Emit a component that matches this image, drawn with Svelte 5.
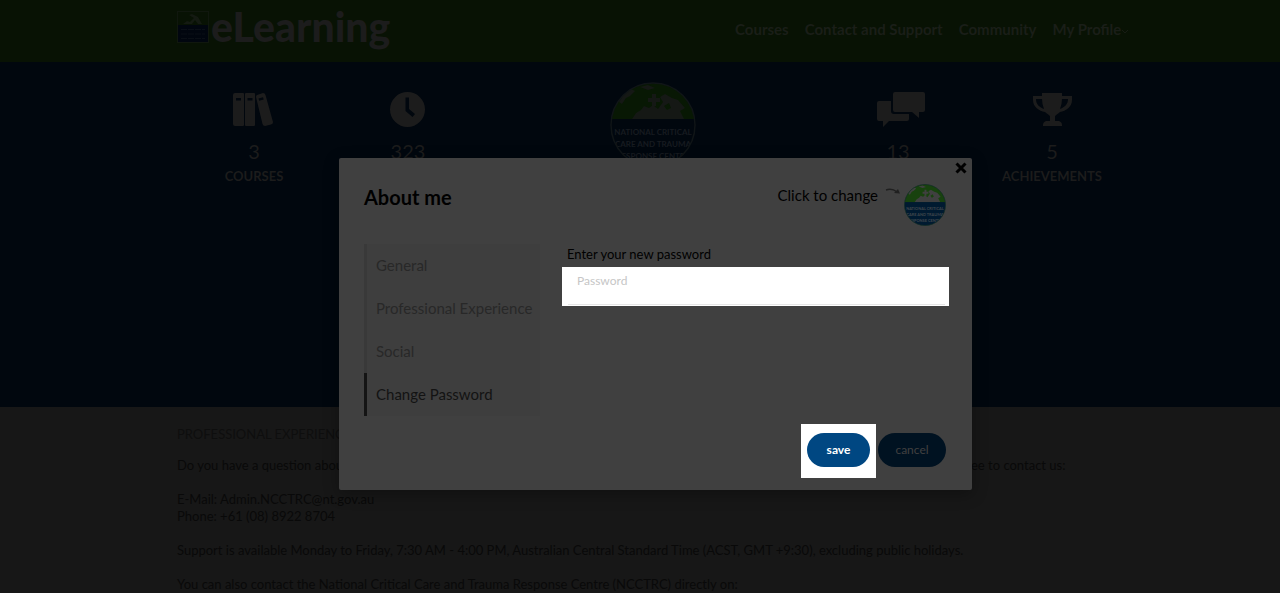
<script>
    const links = ['Courses', 'Contact and Support', 'Community'];
    const tabs = ['General', 'Professional Experience', 'Social', 'Change Password'];
    const stats = [
        { icon: 'books', value: 3, label: 'Courses' },
        { icon: 'clock', value: 323, label: 'Hours' },
        { icon: 'logo' },
        { icon: 'chat', value: 13, label: 'Posts' },
        { icon: 'trophy', value: 5, label: 'Achievements' }
    ];

    let activeTab = $state('Change Password');
    let password = $state('');
</script>

{#snippet globe(kind)}
    <svg class="globe {kind}" viewBox="0 0 86 86" aria-hidden="true">
        <defs>
            <clipPath id="clip-{kind}"><circle cx="43" cy="43" r="42" /></clipPath>
        </defs>
        <g clip-path="url(#clip-{kind})">
            <rect class="land" width="86" height="38" />
            <path class="sky" d="M9 20L14 12L21 7L25 9L20 14L16 16L12 22Z" />
            <path class="sky" d="M30 5L38 3L45 6L38 8Z" />
            <path class="sky" d="M22 37L26 31L31 28L34 24L39 26L43 23L48 27L53 20L50 15L55 12L62 16L68 18L75 26L70 29L74 37Z" />
            <path class="land" d="M54 24L59 21L61 26L57 28Z" />
            <path class="sky" d="M38 16h4v-4h4v4h4v4h-4v4h-4v-4h-4z" />
            <rect class="sea" y="37" width="86" height="49" />
            <g class="words">
                <text x="43" y="53" text-anchor="middle">NATIONAL CRITICAL</text>
                <text x="43" y="65" text-anchor="middle">CARE AND TRAUMA</text>
                <text x="43" y="77" text-anchor="middle">RESPONSE CENTRE</text>
            </g>
        </g>
        <circle class="ring" cx="43" cy="43" r="42" />
    </svg>
{/snippet}

<div class="page">
    <header class="topbar">
        <div class="container topbar-inner">
            <a class="brand" href="#home">
                <svg class="brand-mark" viewBox="0 0 32 32" aria-hidden="true">
                    <rect class="frame" x="0.5" y="0.5" width="31" height="31" />
                    <path class="peak" d="M6 13L10 10L13 11L17 7L12 4L15 3L21 6L25 13H21L18 9L15 13Z" />
                    <rect class="block" x="1" y="14" width="30" height="17" />
                    <path class="rows" d="M4 18.500h24M4 23h24M4 27.500h24" />
                </svg>
                <span>eLearning</span>
            </a>
            <nav class="menu">
                {#each links as link}
                    <a href="#{link}">{link}</a>
                {/each}
                <button class="profile">
                    My Profile
                    <svg viewBox="0 0 8 8" aria-hidden="true"><path d="M1 3l3 3 3-3" /></svg>
                </button>
            </nav>
        </div>
    </header>

    <section class="hero">
        <div class="container stats">
            {#each stats as stat}
                <div class="stat">
                    {#if stat.icon === 'logo'}
                        {@render globe('large')}
                    {:else}
                        <svg class="stat-icon" viewBox="0 0 48 36" aria-hidden="true">
                            {#if stat.icon === 'books'}
                                <path fill-rule="evenodd" d="M5 1h8a1 1 0 0 1 1 1v31a1 1 0 0 1-1 1H5a2 2 0 0 1-2-2V3a2 2 0 0 1 2-2zM6 6v2.500h5V6zM16 1h8a1 1 0 0 1 1 1v31a1 1 0 0 1-1 1h-8a1 1 0 0 1-1-1V2a1 1 0 0 1 1-1zM17.500 6v2.500h5V6zM27 3l6-2q2 0 2.500 2L43 30q0 2-2 2.500L35 34q-2 0-2.500-2L26 5q0-1.500 1-2zM28.500 6.500l.7 2.300 4.500-1.300-.7-2.300z" />
                            {:else if stat.icon === 'clock'}
                                <path fill-rule="evenodd" d="M23.500 0a17.500 17.500 0 1 0 0 35a17.500 17.500 0 0 0 0-35zM21.500 5.500H25V17l6 5-2.500 3-7-6z" />
                            {:else if stat.icon === 'chat'}
                                <path d="M21 0h28q2 0 2 2v16q0 2-2 2h-4v6l-7-6H21q-2 0-2-2V2q0-2 2-2z" />
                                <path d="M5 9h12v10q0 3 3 3h15v5q0 2-2 2H15l-6 6v-6H5q-2 0-2-2V11q0-2 2-2z" />
                            {:else}
                                <path fill-rule="evenodd" d="M14 1h20v3h10v4c0 7-6 11-12 12q-4 3-5 4v5h4q3 1 3 4v1H15v-1q0-3 3-4h4v-5q-1-1-5-4C11 19 5 15 5 8V4h9zM14 7H8c0 5 3 8 8 10q-2-5-2-10zM34 7q0 5-2 10c5-2 8-5 8-10z" />
                            {/if}
                        </svg>
                        <span class="value">{stat.value}</span>
                        <span class="label">{stat.label}</span>
                    {/if}
                </div>
            {/each}
        </div>
    </section>

    <main class="container info">
        <h2>Professional Experience</h2>
        <p>Do you have a question about our courses, or do you need some help to get access to your training or to update your account? Please feel free to contact us:</p>
        <p>E-Mail: Admin.NCCTRC@nt.gov.au<br />Phone: +61 (08) 8922 8704</p>
        <p>Support is available Monday to Friday, 7:30 AM - 4:00 PM, Australian Central Standard Time (ACST, GMT +9:30), excluding public holidays.</p>
        <p>You can also contact the National Critical Care and Trauma Response Centre (NCCTRC) directly on:</p>
    </main>

    <div class="overlay">
        <div class="modal" role="dialog" aria-labelledby="modal-title">
            <button class="close" aria-label="Close">
                <svg viewBox="0 0 12 12" aria-hidden="true"><path d="M1.500 1.500l9 9M10.500 1.500l-9 9" /></svg>
            </button>
            <div class="modal-head">
                <h1 id="modal-title">About me</h1>
                <button class="avatar">
                    <span>Click to change</span>
                    <svg class="arrow" viewBox="0 0 16 8" aria-hidden="true">
                        <path class="tail" d="M1 2Q7 0 12 4" />
                        <path class="tip" d="M9 5L15 5.500L13 1Z" />
                    </svg>
                    {@render globe('small')}
                </button>
            </div>

            <div class="modal-body">
                <div class="tabs" role="tablist">
                    {#each tabs as tab}
                        <button role="tab" aria-selected={activeTab === tab} class:active={activeTab === tab} onclick={() => (activeTab = tab)}>{tab}</button>
                    {/each}
                </div>
                <form class="fields">
                    <label for="new-password">Enter your new password</label>
                    <div class="spotlight field">
                        <input id="new-password" type="password" placeholder="Password" autocomplete="new-password" bind:value={password} />
                    </div>
                </form>
            </div>

            <div class="modal-foot">
                <div class="spotlight action">
                    <button class="btn save">save</button>
                </div>
                <button class="btn cancel">cancel</button>
            </div>
        </div>
    </div>
</div>

<style>
    :global(body) {
        background: #171717;
        overflow: hidden;
    }

    .page {
        position: relative;
        height: 100vh;
        overflow: hidden;
        font-family: Lato, sans-serif;
        font-size: 13px;
        line-height: 17px;
        color: #090909;
    }

    button {
        font-family: inherit;
        border: none;
        background: none;
        padding: 0;
        cursor: pointer;
    }

    .container {
        box-sizing: border-box;
        width: 100%;
        max-width: 978px;
        margin: 0 auto;
        padding-left: 26px;
    }

    .topbar {
        background: #081204;
    }

    .topbar-inner {
        display: flex;
        justify-content: space-between;
        align-items: center;
        height: 62px;
    }

    .brand {
        display: flex;
        align-items: center;
        gap: 2px;
        padding-bottom: 8px;
        color: #1c1c1c;
        font-size: 41px;
        line-height: 48px;
        font-weight: 900;
        text-decoration: none;
    }

    .brand-mark {
        width: 32px;
        height: 32px;
    }

    .frame {
        fill: #081204;
        stroke: #10170e;
    }

    .peak {
        fill: #141a12;
    }

    .block {
        fill: #01060f;
    }

    .rows {
        stroke: #0a0f16;
        stroke-dasharray: 6 1;
    }

    .menu {
        display: flex;
        gap: 16px;
        padding-bottom: 4px;
    }

    .menu a,
    .profile {
        color: #1a1e18;
        font-size: 15px;
        line-height: 18px;
        font-weight: 700;
        text-decoration: none;
        white-space: nowrap;
    }

    .profile svg {
        width: 8px;
        height: 8px;
        margin-left: -4px;
        fill: none;
        stroke: #171c14;
    }

    .hero {
        height: 345px;
        background: #01070e;
    }

    .stats {
        display: grid;
        grid-template-columns: 154px 154px 1fr 154px 154px;
    }

    .stat {
        display: flex;
        flex-direction: column;
        align-items: center;
        padding-top: 30px;
        color: #1c1c1c;
    }

    .stat:nth-child(3) {
        padding-top: 20px;
    }

    .stat-icon {
        width: 48px;
        height: 36px;
        overflow: visible;
        fill: #1c1c1c;
    }

    .value {
        margin-top: 10px;
        font-size: 20px;
        line-height: 26px;
    }

    .label {
        margin-top: 4px;
        font-weight: 700;
        text-transform: uppercase;
    }

    .globe {
        flex: none;
        display: block;
    }

    .globe .ring {
        fill: none;
        stroke-width: 1.5;
    }

    .large {
        width: 86px;
        height: 86px;
    }

    .large .land {
        fill: #081804;
    }

    .large .sky {
        fill: #151815;
    }

    .large .sea {
        fill: #01070e;
    }

    .large .ring {
        stroke: #101517;
    }

    .large .words {
        fill: #171b20;
    }

    .small {
        width: 42px;
        height: 42px;
    }

    .small .land {
        fill: #18420e;
    }

    .small .sky {
        fill: #404040;
    }

    .small .sea {
        fill: #001a30;
    }

    .small .ring {
        stroke: #122d26;
    }

    .small .words {
        fill: #40484d;
    }

    .words {
        font-size: 8px;
        font-weight: 700;
    }

    .info {
        padding-top: 19px;
    }

    .info h2 {
        margin: 0 0 14px;
        color: #0e0e0e;
        font-size: 13px;
        line-height: 17px;
        font-weight: 400;
        text-transform: uppercase;
    }

    .info p {
        margin: 0 0 17px;
        white-space: nowrap;
    }

    .overlay {
        position: absolute;
        inset: 0;
        display: flex;
        justify-content: center;
        align-items: flex-start;
        padding: 158px 0 0 31px;
    }

    .modal {
        position: relative;
        box-sizing: border-box;
        width: 633px;
        padding: 26px 23px 12px 25px;
        border-radius: 2px;
        background: #404040;
        box-shadow: 0 4px 16px rgba(0, 0, 0, 0.3);
        color: #000;
    }

    .close {
        position: absolute;
        top: 4px;
        right: 5px;
        width: 12px;
        height: 12px;
    }

    .close svg {
        display: block;
        stroke: #000;
        stroke-width: 3;
    }

    .modal-head {
        display: flex;
        justify-content: space-between;
        align-items: flex-start;
        padding-right: 3px;
        margin-bottom: 18px;
    }

    .modal-head h1 {
        margin: 0;
        font-size: 20px;
        line-height: 26px;
        font-weight: 700;
    }

    .avatar {
        display: flex;
        color: #000;
        font-size: 15px;
        line-height: 22px;
    }

    .arrow {
        width: 16px;
        height: 8px;
        margin: 4px 3px 0 7px;
    }

    .tail {
        fill: none;
        stroke: #202020;
        stroke-width: 1.5;
    }

    .tip {
        fill: #202020;
    }

    .modal-body {
        display: flex;
        gap: 22px;
    }

    .tabs {
        display: flex;
        flex-direction: column;
        width: 176px;
        background: #3e3e3e;
    }

    .tabs button {
        height: 43px;
        padding: 0 0 2px 9px;
        border-left: 3px solid #393939;
        color: #282828;
        font-size: 15px;
        line-height: 20px;
        text-align: left;
        white-space: nowrap;
    }

    .tabs .active {
        border-left-color: #141414;
        color: #131313;
    }

    .fields {
        flex: 1;
        display: flex;
        flex-direction: column;
    }

    .fields label {
        padding: 2px 0 4px 5px;
    }

    .spotlight {
        background: #fff;
    }

    .field {
        padding: 0 4px 1px 6px;
    }

    .field input {
        display: block;
        box-sizing: border-box;
        width: 100%;
        height: 38px;
        padding: 0 9px 10px;
        border: none;
        border-bottom: 1px solid #e6e6e6;
        outline: none;
        background: #fff;
        font-family: inherit;
        font-size: 12px;
    }

    .field input::placeholder {
        color: #c6c6c6;
        opacity: 1;
    }

    .modal-foot {
        display: flex;
        justify-content: flex-end;
        align-items: baseline;
        gap: 2px;
        margin-top: 8px;
        padding-right: 3px;
    }

    .action {
        padding: 9px 6px 11px;
    }

    .btn {
        height: 34px;
        padding-bottom: 2px;
        border-radius: 17px;
        font-size: 12px;
    }

    .save {
        display: block;
        width: 63px;
        background: #004782;
        color: #fff;
        font-weight: 700;
    }

    .cancel {
        width: 68px;
        background: #001221;
        color: #404040;
    }
</style>
